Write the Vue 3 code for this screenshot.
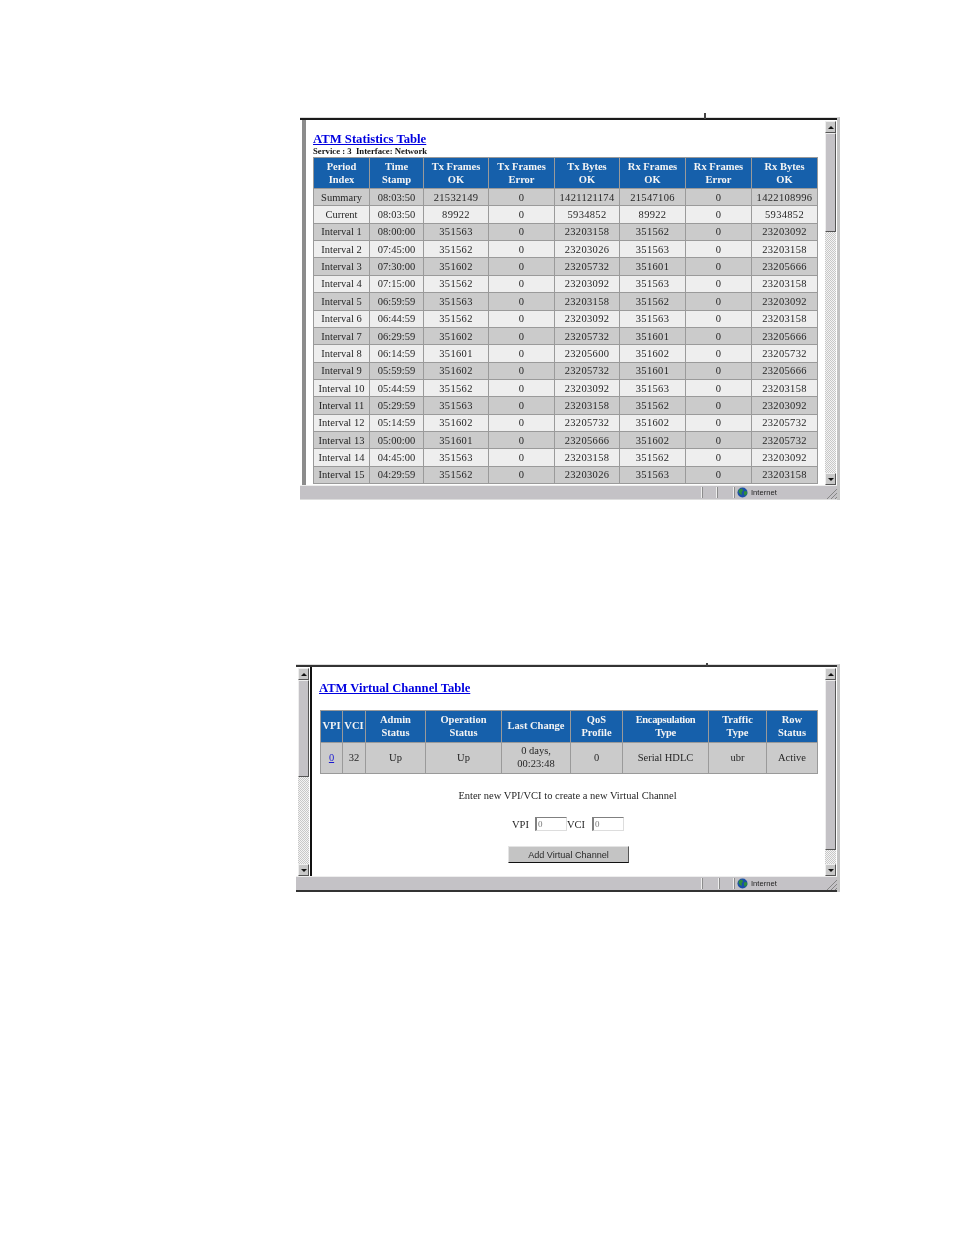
<script setup>
const statCols = ['Period<br>Index','Time<br>Stamp','Tx Frames<br>OK','Tx Frames<br>Error','Tx Bytes<br>OK','Rx Frames<br>OK','Rx Frames<br>Error','Rx Bytes<br>OK']
const statRows = [
['Summary','08:03:50','21532149','0','1421121174','21547106','0','1422108996'],
['Current','08:03:50','89922','0','5934852','89922','0','5934852'],
['Interval 1','08:00:00','351563','0','23203158','351562','0','23203092'],
['Interval 2','07:45:00','351562','0','23203026','351563','0','23203158'],
['Interval 3','07:30:00','351602','0','23205732','351601','0','23205666'],
['Interval 4','07:15:00','351562','0','23203092','351563','0','23203158'],
['Interval 5','06:59:59','351563','0','23203158','351562','0','23203092'],
['Interval 6','06:44:59','351562','0','23203092','351563','0','23203158'],
['Interval 7','06:29:59','351602','0','23205732','351601','0','23205666'],
['Interval 8','06:14:59','351601','0','23205600','351602','0','23205732'],
['Interval 9','05:59:59','351602','0','23205732','351601','0','23205666'],
['Interval 10','05:44:59','351562','0','23203092','351563','0','23203158'],
['Interval 11','05:29:59','351563','0','23203158','351562','0','23203092'],
['Interval 12','05:14:59','351602','0','23205732','351602','0','23205732'],
['Interval 13','05:00:00','351601','0','23205666','351602','0','23205732'],
['Interval 14','04:45:00','351563','0','23203158','351562','0','23203092'],
['Interval 15','04:29:59','351562','0','23203026','351563','0','23203158'],
]
const vcCols = ['VPI','VCI','Admin<br>Status','Operation<br>Status','Last Change','QoS<br>Profile','Encapsulation<br>Type','Traffic<br>Type','Row<br>Status']
const vcRow = ['32','Up','Up','0 days,<br>00:23:48','0','Serial HDLC','ubr','Active']
</script>

<template>
  <div class="page">
    <section class="win win-stats">
      <i class="tick"></i>
      <div class="body">
        <div class="band"></div>
        <div class="content stats-content">
          <a class="title" href="#">ATM Statistics Table</a>
          <div class="service">Service : 3 &nbsp;Interface: Network</div>
          <div class="grid stats-grid">
            <div v-for="c in statCols" :key="c" class="th" v-html="c"></div>
            <template v-for="(r, i) in statRows" :key="i">
              <div v-for="(v, j) in r" :key="j" class="td" :class="{ alt: i % 2 === 1, num: j > 1 }">{{ v }}</div>
            </template>
          </div>
        </div>
        <div class="sb sb-stats">
          <div class="arrow"><i class="up"></i></div>
          <div class="thumb"></div>
          <div class="track"></div>
          <div class="arrow"><i class="down"></i></div>
        </div>
      </div>
      <footer class="status st-stats">
        <span class="cell grow"></span><span class="cell w15"></span><span class="cell w17"></span>
        <span class="cell zone">
          <svg width="11" height="11" viewBox="0 0 11 11"><circle cx="5.5" cy="5.5" r="5" fill="#1c4fa8"/><path d="M2 2.5 5 1.5 6 3.5 4.5 5.5 5 8 3 7 1.5 5zM7 4.5l2.5-.5.8 2.5L8 9 7 7z" fill="#2f8f3a"/></svg>
          <b>Internet</b>
        </span>
        <svg class="grip" width="11" height="11" viewBox="0 0 11 11"><path d="M1 11 11 1M5 11l6-6M9 11l2-2" stroke="#858585" stroke-width="1"/></svg>
      </footer>
    </section>

    <section class="win win-vc">
      <i class="tick"></i>
      <div class="body">
        <div class="sb sb-left">
          <div class="arrow"><i class="up"></i></div>
          <div class="thumb"></div>
          <div class="track"></div>
          <div class="arrow"><i class="down"></i></div>
        </div>
        <div class="content vc-content">
          <a class="title" href="#">ATM Virtual Channel Table</a>
          <div class="grid vc-grid">
            <div v-for="(c, k) in vcCols" :key="c" class="th" :class="{ tight: k === 6 }" v-html="c"></div>
            <div class="td"><a href="#">0</a></div>
            <div v-for="(v, j) in vcRow" :key="j" class="td" v-html="v"></div>
          </div>
          <p class="hint">Enter new VPI/VCI to create a new Virtual Channel</p>
          <form class="fields" @submit.prevent>
            <label>VPI</label><input value="0" readonly>
            <label class="second">VCI</label><input value="0" readonly>
          </form>
          <button class="add" type="button">Add Virtual Channel</button>
        </div>
        <div class="sb sb-right">
          <div class="arrow"><i class="up"></i></div>
          <div class="thumb"></div>
          <div class="track"></div>
          <div class="arrow"><i class="down"></i></div>
        </div>
      </div>
      <footer class="status st-vc">
        <span class="cell grow"></span><span class="cell w17"></span><span class="cell w15"></span>
        <span class="cell zone">
          <svg width="11" height="11" viewBox="0 0 11 11"><circle cx="5.5" cy="5.5" r="5" fill="#1c4fa8"/><path d="M2 2.5 5 1.5 6 3.5 4.5 5.5 5 8 3 7 1.5 5zM7 4.5l2.5-.5.8 2.5L8 9 7 7z" fill="#2f8f3a"/></svg>
          <b>Internet</b>
        </span>
        <svg class="grip" width="11" height="11" viewBox="0 0 11 11"><path d="M1 11 11 1M5 11l6-6M9 11l2-2" stroke="#858585" stroke-width="1"/></svg>
      </footer>
    </section>
  </div>
</template>

<style>
html, body { background: #fff; }
</style>

<style scoped>
.page {
  width: 954px;
  height: 1235px;
  box-sizing: border-box;
  padding-top: 117px;
  overflow: hidden;
  background: #fff;
  font-family: "Liberation Serif", serif;
  color: #262626;
}
.win {
  position: relative;
  display: flex;
  flex-direction: column;
  box-sizing: border-box;
  background: #fff;
  border-top: 1px solid #dcdcdc;
  border-right: 3px solid #c4c4c4;
  filter: blur(0.35px);
}
.win-stats { width: 540px; height: 383px; margin-left: 300px; }
.win-vc { width: 544px; height: 228px; margin-left: 296px; margin-top: 164px; }
.tick { position: absolute; width: 2px; background: #444; }
.win-stats .tick { left: 404px; top: -5px; height: 6px; }
.win-vc .tick { left: 410px; top: -2px; height: 3px; }
.body {
  flex: 1;
  min-height: 0;
  display: flex;
  border-top: 2px solid #1a1a1a;
  overflow: hidden;
}
.win-vc .body { border-top: 2px solid #333; }
.band { width: 4px; margin-left: 2px; background: #8c8c8c; flex: none; }
.content { flex: 1; min-width: 0; overflow: hidden; }
.stats-content { padding: 12px 0 0 7px; }
.vc-content { padding: 14px 0 0 8px; border-left: 2px solid #111; display: flex; flex-direction: column; align-items: flex-start; }
.title {
  display: block;
  font-weight: 700;
  color: #0000e0;
  text-decoration: underline;
  line-height: 15px;
}
.stats-content .title { font-size: 12.7px; margin-bottom: -1px; }
.vc-content .title { font-size: 12.6px; margin: 0 0 14px -1px; }
.service {
  font-size: 8.7px;
  font-weight: 700;
  line-height: 10px;
  color: #111;
  margin: 0 0 1px;
}
.grid {
  display: grid;
  background: #9a9a9a;
  border-top: 1px solid #9a9a9a;
  border-left: 1px solid #9a9a9a;
  box-sizing: border-box;
}
.stats-grid {
  width: 505px;
  grid-template-columns: 56px 54px 65px 66px 65px 66px 66px 66px;
  grid-template-rows: 31px;
  grid-auto-rows: 17.37px;
}
.vc-grid {
  width: 498px;
  grid-template-columns: 22px 23px 60px 76px 69px 52px 86px 58px 51px;
  grid-template-rows: 32px 31px;
}
.th, .td {
  display: flex;
  align-items: center;
  justify-content: center;
  text-align: center;
  box-sizing: border-box;
  font-size: 10.5px;
  line-height: 13px;
  border-right: 1px solid #9a9a9a;
  border-bottom: 1px solid #9a9a9a;
}
.vc-grid .th, .vc-grid .td { padding-bottom: 2px; }
.th { background: #1660ab; color: #f4f4f4; font-weight: 700; }
.th.tight { letter-spacing: -0.35px; }
.td { background: #cbcbcb; white-space: nowrap; }
.td.alt { background: #eeeeee; }
.td.num { letter-spacing: 0.33px; }
.vc-grid .td a { color: #1a1ad0; text-decoration: underline; }
.hint {
  align-self: stretch;
  margin: 15px 0 0;
  text-align: center;
  font-size: 10.5px;
  line-height: 13px;
  padding-right: 10px;
}
.fields {
  align-self: stretch;
  display: flex;
  align-items: center;
  justify-content: flex-start;
  padding-left: 192px;
  margin-top: 15px;
  font-size: 10.5px;
}
.fields label { width: 23px; }
.fields label.second { width: 25px; }
.fields input {
  box-sizing: border-box;
  width: 32px;
  height: 14px;
  padding: 0 0 0 1px;
  font: 9px "Liberation Serif", serif;
  color: #777;
  background: #fff;
  border-style: solid;
  border-width: 1px;
  border-color: #808080 #ddd #ddd #808080;
  border-left-width: 2px;
  outline: none;
}
.add {
  margin: 15px 0 0 188px;
  width: 121px;
  height: 17px;
  padding: 0;
  background: #c4c4c4;
  color: #2a2a2a;
  font: 9.1px "Liberation Sans", sans-serif;
  border: 0;
  border-right: 1px solid #555;
  border-bottom: 1px solid #111;
  border-top: 1px solid #e4e4e4;
  border-left: 1px solid #e4e4e4;
}
.sb {
  flex: none;
  display: flex;
  flex-direction: column;
  width: 11px;
  padding-top: 1px;
  box-sizing: border-box;
}
.sb-stats, .sb-right { margin-right: 1px; }
.sb-left { margin-left: 2px; margin-right: 1px; }
.arrow {
  flex: none;
  height: 12px;
  display: flex;
  align-items: center;
  justify-content: center;
  background: #c8c8c8;
  border-top: 1px solid #eee;
  border-left: 1px solid #eee;
  border-right: 1px solid #555;
  border-bottom: 1px solid #555;
  box-sizing: border-box;
}
.arrow i { width: 0; height: 0; border-left: 3px solid transparent; border-right: 3px solid transparent; }
.arrow .up { border-bottom: 3px solid #111; }
.arrow .down { border-top: 3px solid #111; }
.thumb {
  flex: none;
  box-sizing: border-box;
  background: #c4c2c6;
  border-top: 1px solid #eee;
  border-left: 1px solid #eee;
  border-right: 1px solid #555;
  border-bottom: 1px solid #555;
}
.sb-stats .thumb { height: 99px; }
.sb-left .thumb { height: 97px; }
.sb-right .thumb { height: 170px; }
.track {
  flex: 1;
  background-color: #fff;
  background-image: repeating-conic-gradient(#c8c8c8 0 25%, #f4f4f4 0 50%);
  background-size: 2px 2px;
}
.status {
  flex: none;
  display: flex;
  align-items: stretch;
  box-sizing: border-box;
  background: #c4c2c6;
  border-top: 1px solid #eee;
  position: relative;
}
.st-stats { height: 15px; border-bottom: 1px solid #ddd; }
.st-vc { height: 16px; border-bottom: 2px solid #333; }
.cell { border-right: 1px solid #eee; border-left: 1px solid #8c8c8c; box-sizing: border-box; margin: 1px 0; }
.grow { flex: 1; border-left: 0; }
.w15 { width: 15px; }
.w17 { width: 17px; }
.zone {
  width: 103px;
  display: flex;
  align-items: center;
  gap: 3px;
  padding-left: 2px;
  border-right: 0;
}
.zone b { font: 400 7.6px "Liberation Sans", sans-serif; color: #222; }
.grip { position: absolute; right: 0; bottom: 0; }
</style>
